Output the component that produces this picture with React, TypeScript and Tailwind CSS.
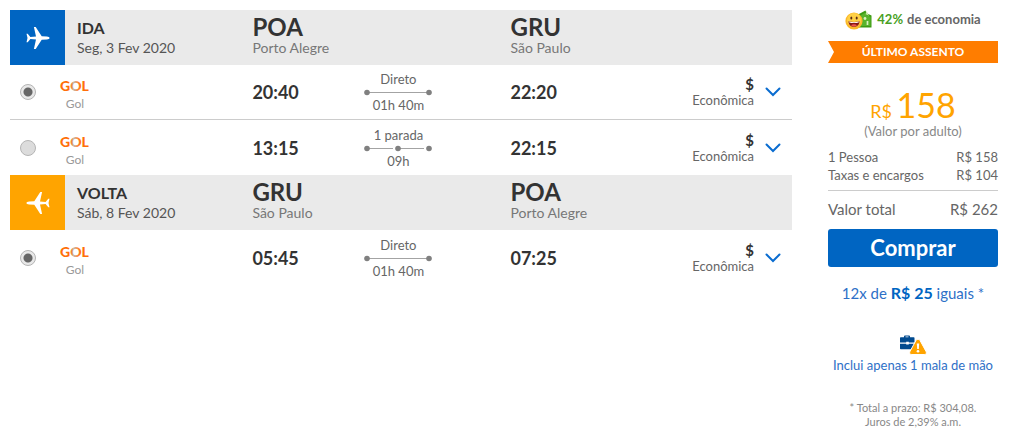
import { useState } from "react";

type Flight = {
  id: string;
  departure: string;
  arrival: string;
  stops: number;
  duration: string;
};

type Airport = { code: string; city: string };

type Leg = {
  id: string;
  title: string;
  date: string;
  from: Airport;
  to: Airport;
  flights: Flight[];
};

const POA: Airport = { code: "POA", city: "Porto Alegre" };
const GRU: Airport = { code: "GRU", city: "São Paulo" };

const legs: Leg[] = [
  {
    id: "ida",
    title: "IDA",
    date: "Seg, 3 Fev 2020",
    from: POA,
    to: GRU,
    flights: [
      { id: "ida-1", departure: "20:40", arrival: "22:20", stops: 0, duration: "01h 40m" },
      { id: "ida-2", departure: "13:15", arrival: "22:15", stops: 1, duration: "09h" },
    ],
  },
  {
    id: "volta",
    title: "VOLTA",
    date: "Sáb, 8 Fev 2020",
    from: GRU,
    to: POA,
    flights: [
      { id: "volta-1", departure: "05:45", arrival: "07:25", stops: 0, duration: "01h 40m" },
    ],
  },
];

const PlaneIcon = ({ flipped }: { flipped: boolean }) => (
  <svg
    viewBox="0 0 24 24"
    className={flipped ? "w-6 h-6 rotate-180" : "w-6 h-6"}
    fill="#fff"
    aria-hidden="true"
  >
    <path d="M.5 7.8h1.2l2.7 3.1 5.6-.4L7.9.9h1.8l6 9.4 5.2.2c1.5.1 2.7.7 2.7 1.5s-1.2 1.4-2.7 1.5l-5.2.2-6 9.4H7.9l2.1-9.6-5.6-.4-2.7 3.1H.5L1.5 12z" />
  </svg>
);

const GolLogo = () => (
  <svg
    width="30"
    height="20"
    viewBox="0 0 30 20"
    className="overflow-visible font-black text-sm"
    fill="#ff6f0a"
    role="img"
    aria-label="GOL"
  >
    <defs>
      <linearGradient id="gol-ring" x1="0" y1="0" x2="1" y2="0">
        <stop offset="0.36" stopColor="#ff6f0a" />
        <stop offset="0.46" stopColor="#c4b8ae" />
        <stop offset="0.6" stopColor="#ff8c3a" />
        <stop offset="0.7" stopColor="#ff6f0a" />
      </linearGradient>
    </defs>
    <text x="0" y="15">
      G<tspan fill="url(#gol-ring)">O</tspan>L
    </text>
  </svg>
);

const StopsLine = ({ stops }: { stops: number }) => (
  <svg width="68" height="8" viewBox="0 0 68 8" aria-hidden="true">
    {stops === 0 ? (
      <path d="M3 4.5h62" stroke="#a3a3a3" />
    ) : (
      <path d="M3 4.5h26M34 4.5h26" stroke="#a3a3a3" />
    )}
    <circle cx="3" cy="4.5" r="2.8" fill="#808080" />
    {stops > 0 && <circle cx="34" cy="4.5" r="2.8" fill="#808080" />}
    <circle cx="65" cy="4.5" r="2.8" fill="#808080" />
  </svg>
);

const SavingsIcon = () => (
  <svg width="28" height="20" viewBox="0 0 28 20" aria-hidden="true">
    <path d="M13 4.5L20.5.5l1 2.8 5 2.200v12H13z" fill="#3c9a12" />
    <path d="M16 5l4-2.200 1 2.200 4.500 1.700v9.300H16z" fill="#58b32c" />
    <path d="M21.5 1l-1 3.200 3.500 1.600z" fill="#c8eaa9" />
    <circle cx="20" cy="8.5" r="1.4" fill="#d9f2c0" />
    <path d="M22.5 11v4M21.3 12h2.400M21.300 14h2.400" stroke="#d9f2c0" />
    <circle cx="9" cy="11" r="8.6" fill="#fbb829" />
    <circle cx="9" cy="10" r="7" fill="#ffd045" />
    <ellipse cx="6.3" cy="8" rx="1" ry="1.5" fill="#5b2c14" />
    <ellipse cx="11.7" cy="8" rx="1" ry="1.5" fill="#5b2c14" />
    <path d="M3.5 11.2q5.5 1.600 11 0c0 3.400-2.200 5.600-5.500 5.600s-5.500-2.200-5.500-5.600z" fill="#871a16" />
    <path d="M4.3 11.5q4.700 1.300 9.400 0v1q-4.700 1.200-9.400 0z" fill="#fff" />
    <path d="M6 15.2c1.700-1.200 4.300-1.200 6 0-1.600 1.600-4.400 1.600-6 0z" fill="#f0554c" />
  </svg>
);

const BaggageIcon = () => (
  <svg width="28" height="20" viewBox="0 0 28 20" aria-hidden="true">
    <path
      d="M5 2.300V1.500q0-1 1-1h4q1 0 1 1v.8h3.800q.7 0 .7.700v4.600H9.800v-.8H7.200v.8H1V3q0-.7.700-.7zM6.500 2.300h3v-.8h-3z"
      fill="#004a8f"
      fillRule="evenodd"
    />
    <path d="M1 8.700h6.200v.9h2.600v-.9h5.700v5.600H1.700q-.7 0-.7-.7z" fill="#004a8f" />
    <path
      d="M19 4.200q1.300 0 2 1.200l6 11q1.300 3.100-1.800 3.100H12.800q-3.100 0-1.800-3.100l6-11q.7-1.200 2-1.200z"
      fill="#ffa400"
      stroke="#fff"
    />
    <path d="M17.800 8.500h2.400l-.4 5.500h-1.600z" fill="#fff" />
    <circle cx="19" cy="16.2" r="1.3" fill="#fff" />
  </svg>
);

const LegHeader = ({ leg }: { leg: Leg }) => {
  const isReturn = leg.id === "volta";

  return (
    <div className="grid grid-cols-[31%_33%_1fr] bg-[#eaeaea] h-[55px]">
      <div className="flex items-center gap-3">
        <div
          className={`flex items-center justify-center w-[55px] h-full ${
            isReturn ? "bg-[#ffa400]" : "bg-[#0065c2]"
          }`}
        >
          <PlaneIcon flipped={isReturn} />
        </div>
        <div>
          <h2 className="text-base leading-5 font-bold text-[#333]">
            {leg.title}
          </h2>
          <p className="text-sm leading-5 text-[#555]">{leg.date}</p>
        </div>
      </div>
      {[leg.from, leg.to].map((airport) => (
        <div key={airport.code} className="pt-1">
          <p className="text-2xl leading-[26px] font-bold text-[#333]">
            {airport.code}
          </p>
          <p className="text-sm leading-4 text-[#777]">{airport.city}</p>
        </div>
      ))}
    </div>
  );
};

type FlightRowProps = {
  flight: Flight;
  leg: Leg;
  checked: boolean;
  onSelect: () => void;
};

const FlightRow = ({ flight, leg, checked, onSelect }: FlightRowProps) => (
  <div className="grid grid-cols-[31%_33%_1fr] items-center h-[55px] border-b border-[#ccc] last:border-b-0">
    <label className="flex items-center pl-[10px] gap-6">
      <input
        type="radio"
        name={leg.id}
        value={flight.id}
        checked={checked}
        onChange={onSelect}
        aria-label={`${leg.title} ${flight.departure}`}
        className="appearance-none w-4 h-4 rounded-full border border-[#b5b5b5] bg-[#dcdcdc] checked:bg-[radial-gradient(circle,#666_4px,#e8e8e8_5px)]"
      />
      <span className="flex flex-col items-center pt-1">
        <GolLogo />
        <span className="text-xs leading-4 text-[#999]">Gol</span>
      </span>
    </label>
    <div className="flex items-center">
      <span className="w-28 text-lg font-bold text-[#333]">
        {flight.departure}
      </span>
      <div className="flex flex-col items-center w-[68px] text-[13px] leading-[18px] text-[#666]">
        <span>{flight.stops === 0 ? "Direto" : `${flight.stops} parada`}</span>
        <StopsLine stops={flight.stops} />
        <span>{flight.duration}</span>
      </div>
    </div>
    <div className="flex items-center">
      <span className="text-lg font-bold text-[#333]">{flight.arrival}</span>
      <div className="ml-auto text-right">
        <p className="text-[15px] leading-4 font-bold text-[#333]">$</p>
        <p className="text-[13px] leading-4 text-[#666]">Econômica</p>
      </div>
      <button type="button" aria-label="Ver detalhes" className="mx-[11px]">
        <svg width="16" height="12" viewBox="0 0 16 12" fill="none" aria-hidden="true">
          <path
            d="M1.5 2.5L8 9l6.5-6.5"
            stroke="#0a6cd0"
            strokeWidth="2"
            strokeLinecap="round"
          />
        </svg>
      </button>
    </div>
  </div>
);

const PriceSummary = () => (
  <aside className="w-[170px] shrink-0 text-[#666]">
    <div className="flex items-center justify-center gap-1 h-5 text-[13px] font-bold whitespace-nowrap">
      <SavingsIcon />
      <span className="text-[#48a023]">42%</span>
      <span>de economia</span>
    </div>

    <p className="mt-[11px] h-[22px] text-center text-xs leading-[22px] font-bold text-white bg-[#ff7d00] [clip-path:polygon(0_0,100%_0,100%_100%,0_100%,6px_50%)]">
      ÚLTIMO ASSENTO
    </p>

    <p className="mt-6 text-center text-[34px] leading-9 text-[#ffa400]">
      <span className="text-lg leading-none">R$ </span>158
    </p>
    <p className="text-center text-[13px] leading-4 text-[#888]">
      (Valor por adulto)
    </p>

    <dl className="mt-[9px] pb-[6px] grid grid-cols-[1fr_auto] text-[13px] leading-[18px] border-b border-[#ccc]">
      <dt>1 Pessoa</dt>
      <dd className="text-right">R$ 158</dd>
      <dt>Taxas e encargos</dt>
      <dd className="text-right">R$ 104</dd>
    </dl>
    <dl className="flex justify-between mt-2 text-[15px] leading-5">
      <dt>Valor total</dt>
      <dd>R$ 262</dd>
    </dl>

    <button
      type="button"
      className="mt-[10px] w-full h-[38px] rounded-[3px] bg-[#0065c2] text-[22px] leading-8 font-bold text-white hover:bg-[#0057a8]"
    >
      Comprar
    </button>

    <p className="mt-4 text-center text-[15px] leading-5 text-[#2e70c7]">
      12x de <strong className="text-base leading-5 text-[#0065c2]">R$ 25</strong> iguais *
    </p>

    <div className="mt-8 flex flex-col items-center">
      <BaggageIcon />
      <a href="#bagagem" className="text-[13px] leading-5 whitespace-nowrap text-[#2e70c7]">
        Inclui apenas 1 mala de mão
      </a>
    </div>

    <p className="mt-[26px] text-center text-[11px] leading-[14px] text-[#888]">
      * Total a prazo: R$ 304,08.
      <br />
      Juros de 2,39% a.m.
    </p>
  </aside>
);

const App = () => {
  const [selected, setSelected] = useState<Record<string, string>>({
    ida: "ida-1",
    volta: "volta-1",
  });

  return (
    <main className="flex items-start gap-9 pt-[10px] pl-[10px] pr-[26px] bg-white font-[Lato,sans-serif]">
      <div className="flex-1">
        {legs.map((leg) => (
          <section key={leg.id}>
            <LegHeader leg={leg} />
            {leg.flights.map((flight) => (
              <FlightRow
                key={flight.id}
                flight={flight}
                leg={leg}
                checked={selected[leg.id] === flight.id}
                onSelect={() => setSelected({ ...selected, [leg.id]: flight.id })}
              />
            ))}
          </section>
        ))}
      </div>
      <PriceSummary />
    </main>
  );
};

export default App;
